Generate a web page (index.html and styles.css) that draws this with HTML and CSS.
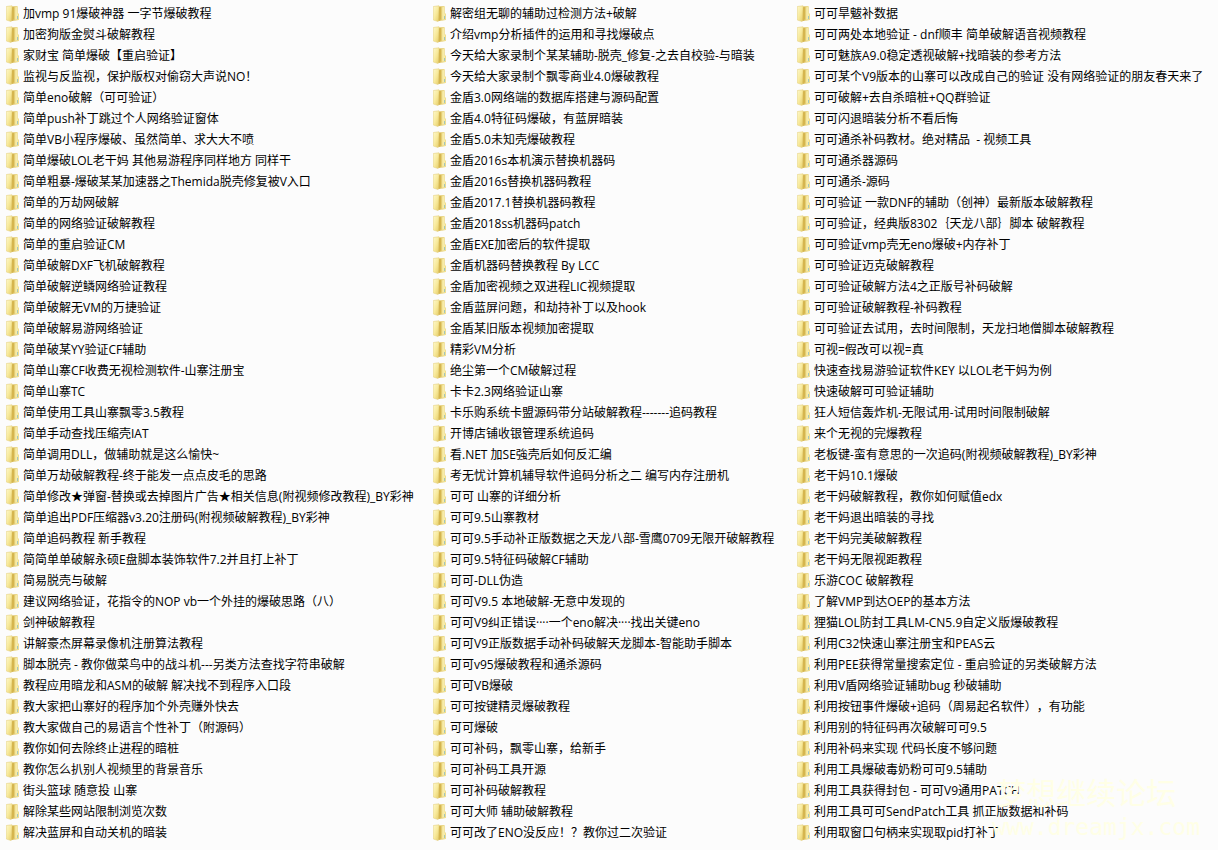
FILE: index.html
```html
<!DOCTYPE html>
<html lang="zh-CN">
<head>
    <meta charset="UTF-8">
    <meta name="viewport" content="width=device-width, initial-scale=1.0">
    <title>教程目录</title>
    <link rel="stylesheet" href="styles.css">
</head>
<body>
    <main class="file-list">
        <ul class="column">
            <li>加vmp 91爆破神器 一字节爆破教程</li>
            <li>加密狗版金熨斗破解教程</li>
            <li>家财宝 简单爆破【重启验证】</li>
            <li>监视与反监视，保护版权对偷窃大声说NO！</li>
            <li>简单eno破解（可可验证）</li>
            <li>简单push补丁跳过个人网络验证窗体</li>
            <li>简单VB小程序爆破、虽然简单、求大大不喷</li>
            <li>简单爆破LOL老干妈 其他易游程序同样地方 同样干</li>
            <li>简单粗暴-爆破某某加速器之Themida脱壳修复被V入口</li>
            <li>简单的万劫网破解</li>
            <li>简单的网络验证破解教程</li>
            <li>简单的重启验证CM</li>
            <li>简单破解DXF飞机破解教程</li>
            <li>简单破解逆鳞网络验证教程</li>
            <li>简单破解无VM的万捷验证</li>
            <li>简单破解易游网络验证</li>
            <li>简单破某YY验证CF辅助</li>
            <li>简单山寨CF收费无视检测软件-山寨注册宝</li>
            <li>简单山寨TC</li>
            <li>简单使用工具山寨飘零3.5教程</li>
            <li>简单手动查找压缩壳IAT</li>
            <li>简单调用DLL，做辅助就是这么愉快~</li>
            <li>简单万劫破解教程-终于能发一点点皮毛的思路</li>
            <li>简单修改★弹窗-替换或去掉图片广告★相关信息(附视频修改教程)_BY彩神</li>
            <li>简单追出PDF压缩器v3.20注册码(附视频破解教程)_BY彩神</li>
            <li>简单追码教程 新手教程</li>
            <li>简简单单破解永硕E盘脚本装饰软件7.2并且打上补丁</li>
            <li>简易脱壳与破解</li>
            <li>建议网络验证，花指令的NOP vb一个外挂的爆破思路（八）</li>
            <li>剑神破解教程</li>
            <li>讲解豪杰屏幕录像机注册算法教程</li>
            <li>脚本脱壳 - 教你做菜鸟中的战斗机---另类方法查找字符串破解</li>
            <li>教程应用暗龙和ASM的破解 解决找不到程序入口段</li>
            <li>教大家把山寨好的程序加个外壳赚外快去</li>
            <li>教大家做自己的易语言个性补丁（附源码）</li>
            <li>教你如何去除终止进程的暗桩</li>
            <li>教你怎么扒别人视频里的背景音乐</li>
            <li>街头篮球 随意投 山寨</li>
            <li>解除某些网站限制浏览次数</li>
            <li>解决蓝屏和自动关机的暗装</li>
        </ul>

        <ul class="column">
            <li>解密组无聊的辅助过检测方法+破解</li>
            <li>介绍vmp分析插件的运用和寻找爆破点</li>
            <li>今天给大家录制个某某辅助-脱壳_修复-之去自校验-与暗装</li>
            <li>今天给大家录制个飘零商业4.0爆破教程</li>
            <li>金盾3.0网络端的数据库搭建与源码配置</li>
            <li>金盾4.0特征码爆破，有蓝屏暗装</li>
            <li>金盾5.0未知壳爆破教程</li>
            <li>金盾2016s本机演示替换机器码</li>
            <li>金盾2016s替换机器码教程</li>
            <li>金盾2017.1替换机器码教程</li>
            <li>金盾2018ss机器码patch</li>
            <li>金盾EXE加密后的软件提取</li>
            <li>金盾机器码替换教程 By LCC</li>
            <li>金盾加密视频之双进程LIC视频提取</li>
            <li>金盾蓝屏问题，和劫持补丁以及hook</li>
            <li>金盾某旧版本视频加密提取</li>
            <li>精彩VM分析</li>
            <li>绝尘第一个CM破解过程</li>
            <li>卡卡2.3网络验证山寨</li>
            <li>卡乐购系统卡盟源码带分站破解教程-------追码教程</li>
            <li>开博店铺收银管理系统追码</li>
            <li>看.NET 加SE強壳后如何反汇编</li>
            <li>考无忧计算机辅导软件追码分析之二 编写内存注册机</li>
            <li>可可 山寨的详细分析</li>
            <li>可可9.5山寨教材</li>
            <li>可可9.5手动补正版数据之天龙八部-雪鹰0709无限开破解教程</li>
            <li>可可9.5特征码破解CF辅助</li>
            <li>可可-DLL伪造</li>
            <li>可可V9.5 本地破解-无意中发现的</li>
            <li>可可V9纠正错误····一个eno解决····找出关键eno</li>
            <li>可可V9正版数据手动补码破解天龙脚本-智能助手脚本</li>
            <li>可可v95爆破教程和通杀源码</li>
            <li>可可VB爆破</li>
            <li>可可按键精灵爆破教程</li>
            <li>可可爆破</li>
            <li>可可补码，飘零山寨，给新手</li>
            <li>可可补码工具开源</li>
            <li>可可补码破解教程</li>
            <li>可可大师 辅助破解教程</li>
            <li>可可改了ENO没反应！？教你过二次验证</li>
        </ul>

        <ul class="column">
            <li>可可旱魃补数据</li>
            <li>可可两处本地验证 - dnf顺丰 简单破解语音视频教程</li>
            <li>可可魅族A9.0稳定透视破解+找暗装的参考方法</li>
            <li>可可某个V9版本的山寨可以改成自己的验证 没有网络验证的朋友春天来了</li>
            <li>可可破解+去自杀暗桩+QQ群验证</li>
            <li>可可闪退暗装分析不看后悔</li>
            <li>可可通杀补码教材。绝对精品&nbsp; - 视频工具</li>
            <li>可可通杀器源码</li>
            <li>可可通杀-源码</li>
            <li>可可验证 一款DNF的辅助（创神）最新版本破解教程</li>
            <li>可可验证，经典版8302｛天龙八部｝脚本 破解教程</li>
            <li>可可验证vmp壳无eno爆破+内存补丁</li>
            <li>可可验证迈克破解教程</li>
            <li>可可验证破解方法4之正版号补码破解</li>
            <li>可可验证破解教程-补码教程</li>
            <li>可可验证去试用，去时间限制，天龙扫地僧脚本破解教程</li>
            <li>可视=假改可以视=真</li>
            <li>快速查找易游验证软件KEY 以LOL老干妈为例</li>
            <li>快速破解可可验证辅助</li>
            <li>狂人短信轰炸机-无限试用-试用时间限制破解</li>
            <li>来个无视的完爆教程</li>
            <li>老板键-蛮有意思的一次追码(附视频破解教程)_BY彩神</li>
            <li>老干妈10.1爆破</li>
            <li>老干妈破解教程，教你如何赋值edx</li>
            <li>老干妈退出暗装的寻找</li>
            <li>老干妈完美破解教程</li>
            <li>老干妈无限视距教程</li>
            <li>乐游COC 破解教程</li>
            <li>了解VMP到达OEP的基本方法</li>
            <li>狸猫LOL防封工具LM-CN5.9自定义版爆破教程</li>
            <li>利用C32快速山寨注册宝和PEAS云</li>
            <li>利用PEE获得常量搜索定位 - 重启验证的另类破解方法</li>
            <li>利用V盾网络验证辅助bug 秒破辅助</li>
            <li>利用按钮事件爆破+追码（周易起名软件），有功能</li>
            <li>利用别的特征码再次破解可可9.5</li>
            <li>利用补码来实现 代码长度不够问题</li>
            <li>利用工具爆破毒奶粉可可9.5辅助</li>
            <li>利用工具获得封包 - 可可V9通用PATCH</li>
            <li>利用工具可可SendPatch工具 抓正版数据和补码</li>
            <li>利用取窗口句柄来实现取pid打补丁</li>
        </ul>
    </main>

    <div class="watermark">
        <p class="watermark-name">梦想继续论坛</p>
        <p class="watermark-url">www.dreamjx.com</p>
    </div>
</body>
</html>
```
FILE: styles.css
```css
:root {
    --bg-color: #fcfcfc;
    --text-color: #000;
    --watermark-color: #ffffe6;
}

body {
    position: relative;
    margin: 0;
    background-color: var(--bg-color);
    color: var(--text-color);
    font-family: "Open Sans", "Noto Sans CJK SC", sans-serif;
    font-size: 12px;
    line-height: 21px;
    text-spacing-trim: space-all;
}

.file-list {
    display: grid;
    grid-template-columns: 427fr 364fr 421fr;
    padding: 3px 0 7px 6px;
}

.column {
    margin: 0;
    padding: 0;
    list-style: none;
}

/* folder icon */
.column li {
    padding-left: 17px;
    white-space: nowrap;
    background: url("data:image/svg+xml,%3Csvg xmlns='http://www.w3.org/2000/svg' width='13' height='17' viewBox='0 0 13 17'%3E%3Cdefs%3E%3ClinearGradient id='a' x2='1' y2='1'%3E%3Cstop stop-color='%23fdf8cc'/%3E%3Cstop offset='.5' stop-color='%23f8ea9c'/%3E%3Cstop offset='1' stop-color='%23e5cc68'/%3E%3C/linearGradient%3E%3ClinearGradient id='b'%3E%3Cstop stop-color='%23d2b24c'/%3E%3Cstop offset='1' stop-color='%23f8eba4'/%3E%3C/linearGradient%3E%3C/defs%3E%3Cpath d='M5 1.500L11 1V8L13 9V15L6 16z' fill='url(%23b)'/%3E%3Cpath d='M9 2L11.500 1.500V8L12.500 9V14.500L9 15z' fill='%23f8eca8' stroke='%23e6d17c' stroke-width='.5'/%3E%3Cpath d='M.3 1.500L6 .8V15L5 16.500 .3 15z' fill='url(%23a)' stroke='%23e6d283' stroke-width='.6'/%3E%3Cpath d='M6 2.500L8 2V14L5.500 16.500z' fill='%23d5b54e'/%3E%3Cpath d='M11.500 11v3' stroke='%23a3c6bb'/%3E%3C/svg%3E") no-repeat left center;
}

.watermark {
    position: absolute;
    right: 18px;
    bottom: 8px;
    color: var(--watermark-color);
    pointer-events: none;
}

.watermark p {
    margin: 0;
}

.watermark-name {
    padding-left: 4px;
    font-size: 30px;
    line-height: 38px;
}

.watermark-url {
    font-family: "DejaVu Sans Mono", monospace;
    font-size: 23px;
    line-height: 30px;
}
```
